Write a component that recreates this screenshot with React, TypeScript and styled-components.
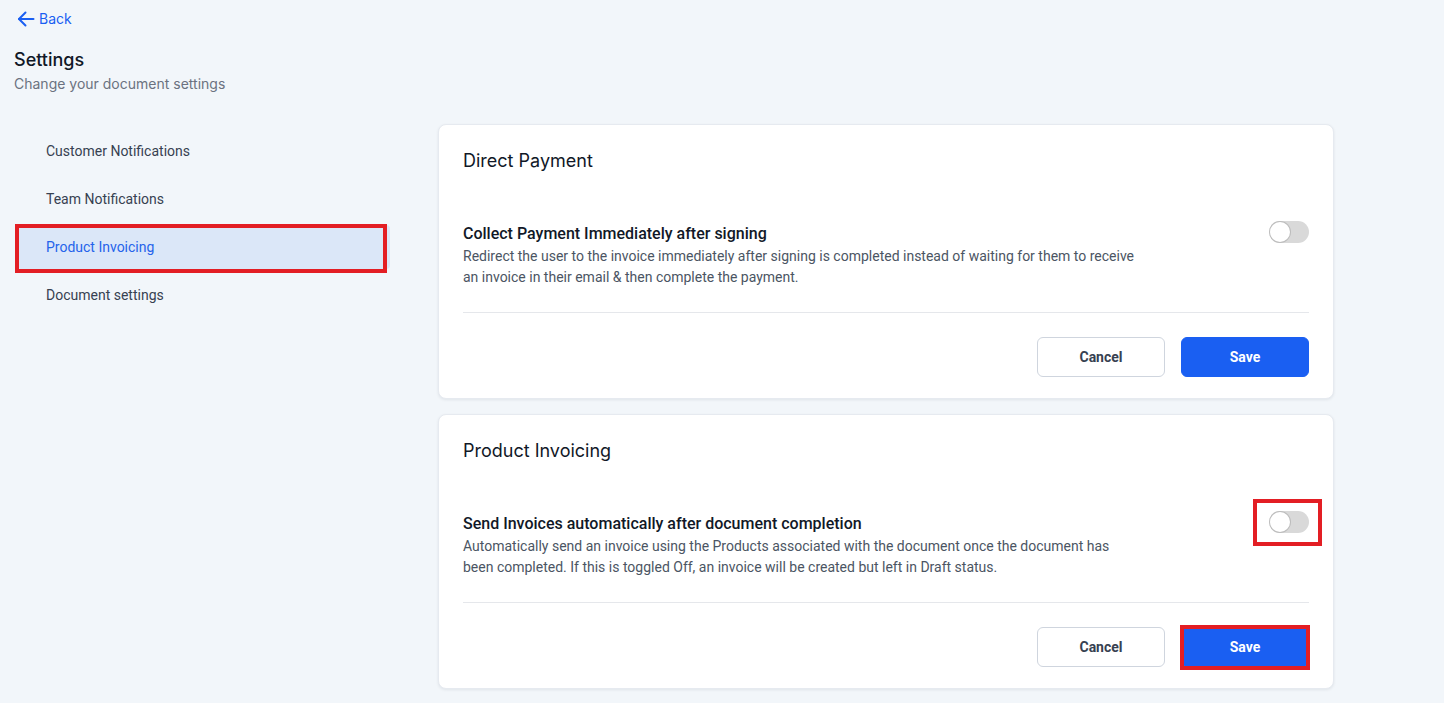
import React from 'react'
import styled, { createGlobalStyle, css } from 'styled-components'

const GlobalStyle = createGlobalStyle`
	html, body {
		margin: 0;
		padding: 0;
		background: #f2f6fa;
		font-family: Inter, "Noto Sans", sans-serif;
		color: #111827;
	}
	*, *::before, *::after {
		box-sizing: border-box;
	}
`

const Page = styled.div`
	min-height: 703px;
	padding: 8px 0 0 14px;
`

const BackLink = styled.a`
	display: inline-flex;
	align-items: center;
	gap: 4px;
	margin-left: 3px;

	color: #1a5ff2;
	font-size: 14px;
	line-height: 22px;
	text-decoration: none;
`

const Header = styled.div`
	margin-top: 15px;
`

const Title = styled.h1`
	margin: 0;

	font-size: 18px;
	font-weight: 500;
	line-height: 26px;
	color: #111827;
`

const Subtitle = styled.p`
	margin: 0;

	font-size: 14px;
	line-height: 22px;
	color: #6b7280;
`

const Body = styled.div`
	margin-top: 29px;

	display: flex;
	align-items: flex-start;
	gap: 48px;
`

const Sidebar = styled.nav`
	width: 376px;
	padding-top: 5px;

	display: flex;
	flex-direction: column;
	gap: 4px;
`

const NavItem = styled.div<{ active?: boolean }>`
	position: relative;
	height: 44px;
	margin-left: 3px;
	padding-left: 29px;
	border-radius: 4px;

	display: flex;
	align-items: center;

	font-family: Roboto, sans-serif;
	font-size: 14px;
	color: #374151;

	${props => props.active && css`
		background: #dbe7f8;
		color: #2563eb;

		&::after {
			content: '';
			position: absolute;
			left: -2px;
			top: -1px;
			width: 372px;
			height: 49px;
			border: 4px solid #e31e24;
		}
	`}
`

const Cards = styled.div`
	width: 896px;

	display: flex;
	flex-direction: column;
	gap: 15px;
`

const Card = styled.section`
	padding: 23px 24px 21px;
	border: 1px solid #e6eaf0;
	border-radius: 8px;

	background: #ffffff;
	box-shadow: 0 1px 3px rgba(16, 24, 40, 0.08);
`

const CardTitle = styled.h2`
	margin: 0;

	font-size: 18px;
	font-weight: 400;
	line-height: 26px;
	color: #111827;
`

const SettingRow = styled.div`
	margin-top: 49px;
	padding-bottom: 24px;
	border-bottom: 1px solid #e5e7eb;

	display: flex;
	justify-content: space-between;
	align-items: flex-start;

	font-family: Roboto, sans-serif;
`

const SettingText = styled.div`
	width: 700px;
`

const SettingLabel = styled.div`
	font-size: 16px;
	font-weight: 500;
	line-height: 22px;
	color: #111827;
`

const SettingDesc = styled.p`
	margin: 1px 0 0;

	font-size: 14px;
	line-height: 21px;
	color: #4b5563;
`

const Toggle = styled.button<{ marked?: boolean }>`
	position: relative;
	width: 40px;
	height: 22px;
	margin-top: -2px;
	padding: 0;
	border: none;
	border-radius: 11px;

	background: #d9d9d9;
	cursor: pointer;

	&::before {
		content: '';
		position: absolute;
		left: 1px;
		top: 1px;
		width: 20px;
		height: 20px;
		border-radius: 50%;

		background: #ffffff;
		box-shadow: 0 0 0 1px #bdbdbd;
	}

	${props => props.marked && css`
		&::after {
			content: '';
			position: absolute;
			left: -16px;
			top: -12px;
			width: 69px;
			height: 47px;
			border: 4px solid #e31e24;
		}
	`}
`

const Actions = styled.div`
	padding-top: 24px;

	display: flex;
	justify-content: flex-end;
	gap: 16px;
`

const Button = styled.button<{ primary?: boolean; marked?: boolean }>`
	position: relative;
	width: 128px;
	height: 40px;
	border-radius: 6px;

	font-family: Roboto, sans-serif;
	font-size: 14px;
	font-weight: 700;
	cursor: pointer;

	${props => props.primary
		? css`
			border: 1px solid #1a5ff2;
			background: #1a5ff2;
			color: #ffffff;
		`
		: css`
			border: 1px solid #cfd5de;
			background: #ffffff;
			color: #374151;
		`}

	${props => props.marked && css`
		&::after {
			content: '';
			position: absolute;
			left: -2px;
			top: -3px;
			width: 130px;
			height: 45px;
			border: 4px solid #e31e24;
		}
	`}
`

const BackArrow = () => (
	<svg width="18" height="18" viewBox="0 0 18 18" fill="none" stroke="currentColor" strokeWidth="2" strokeLinecap="round" strokeLinejoin="round">
		<path d="M16.5 9H2" />
		<path d="M8.5 2.5L2 9l6.5 6.5" />
	</svg>
)

interface ISettingCard {
	title: string
	label: string
	description: string[]
	marked?: boolean
}

const SettingCard: React.FC<ISettingCard> = ({ title, label, description, marked }) => (
	<Card>
		<CardTitle>{title}</CardTitle>
		<SettingRow>
			<SettingText>
				<SettingLabel>{label}</SettingLabel>
				<SettingDesc>
					{description.map((line, i) => (
						<React.Fragment key={i}>
							{line}
							{i < description.length - 1 && <br />}
						</React.Fragment>
					))}
				</SettingDesc>
			</SettingText>
			<Toggle marked={marked} aria-label={label} />
		</SettingRow>
		<Actions>
			<Button>Cancel</Button>
			<Button primary marked={marked}>Save</Button>
		</Actions>
	</Card>
)

const navItems = ['Customer Notifications', 'Team Notifications', 'Product Invoicing', 'Document settings']

const App: React.FC = () => {
	return (
		<>
			<GlobalStyle />
			<Page>
				<BackLink href="#"><BackArrow />Back</BackLink>
				<Header>
					<Title>Settings</Title>
					<Subtitle>Change your document settings</Subtitle>
				</Header>
				<Body>
					<Sidebar>
						{navItems.map(item => (
							<NavItem key={item} active={item === 'Product Invoicing'}>{item}</NavItem>
						))}
					</Sidebar>
					<Cards>
						<SettingCard
							title="Direct Payment"
							label="Collect Payment Immediately after signing"
							description={[
								'Redirect the user to the invoice immediately after signing is completed instead of waiting for them to receive',
								'an invoice in their email & then complete the payment.',
							]}
						/>
						<SettingCard
							title="Product Invoicing"
							label="Send Invoices automatically after document completion"
							description={[
								'Automatically send an invoice using the Products associated with the document once the document has',
								'been completed. If this is toggled Off, an invoice will be created but left in Draft status.',
							]}
							marked
						/>
					</Cards>
				</Body>
			</Page>
		</>
	)
}

export default App
